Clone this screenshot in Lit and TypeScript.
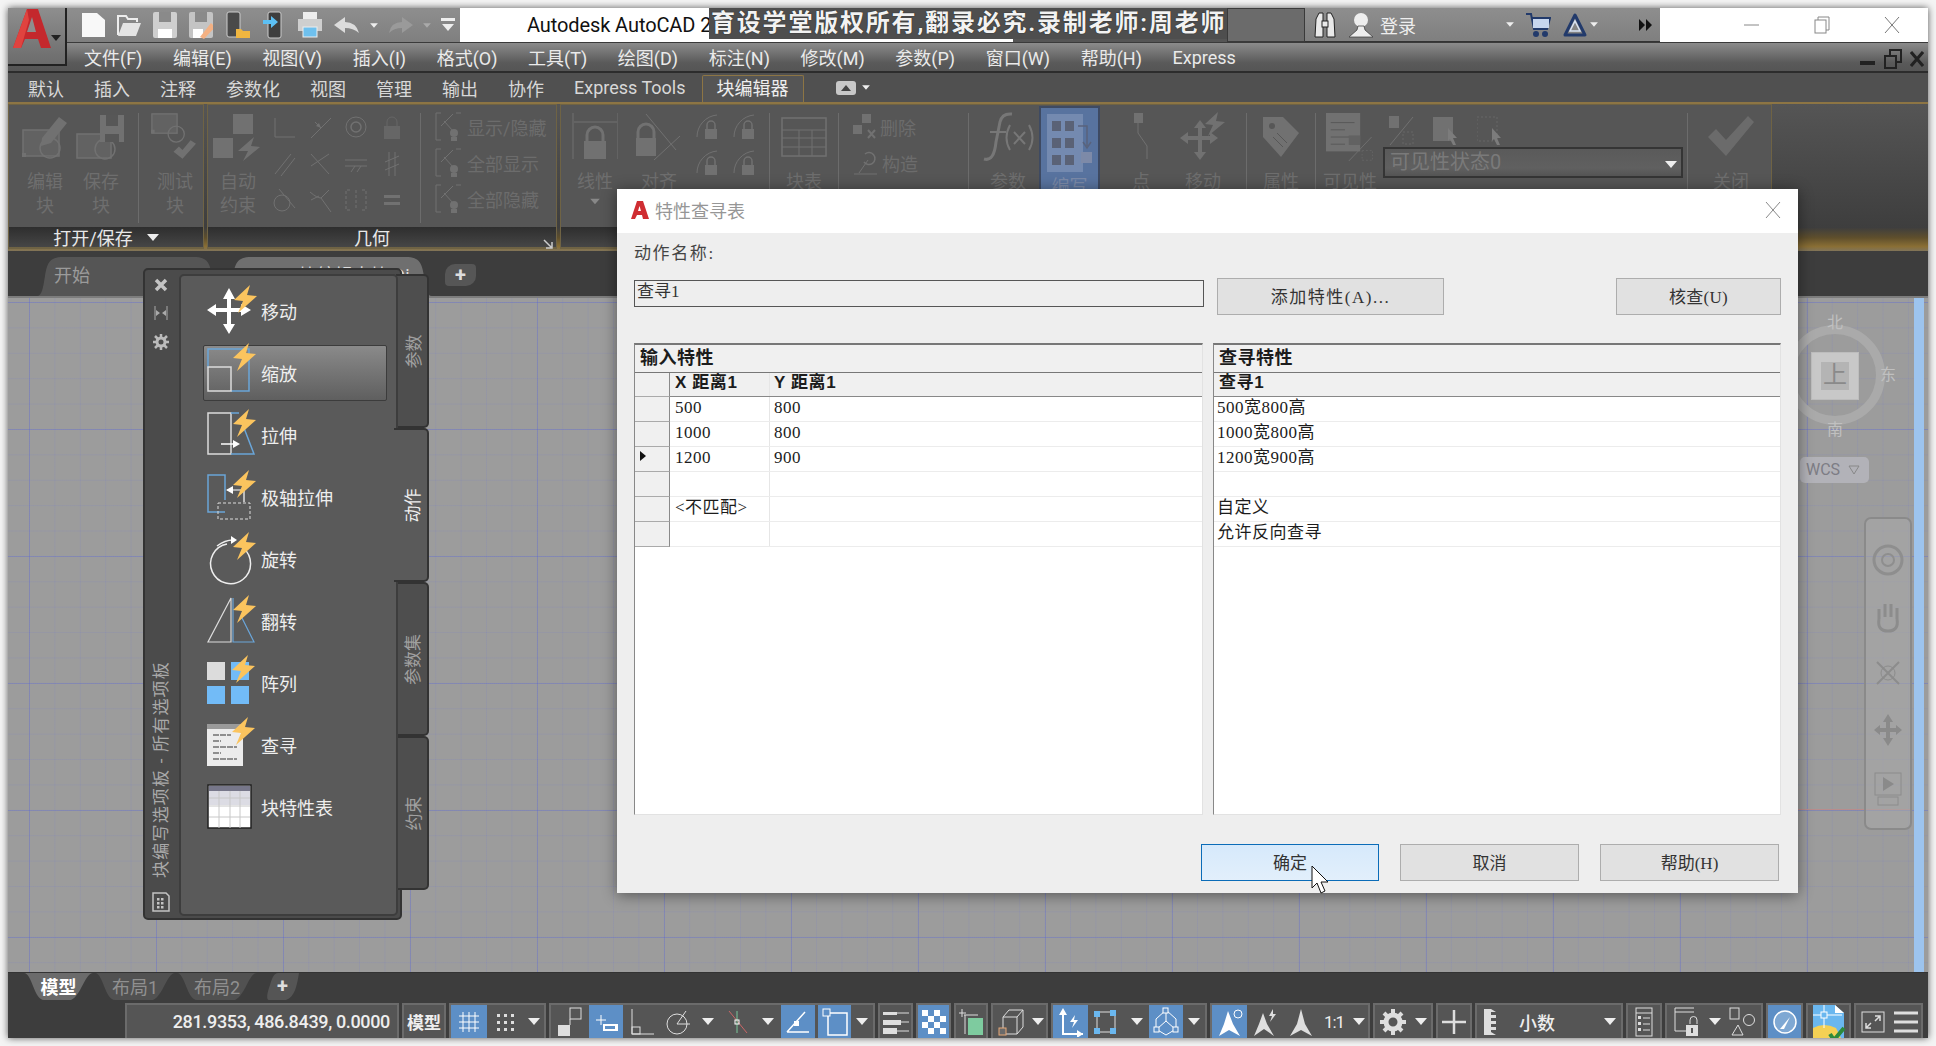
import { LitElement, html, css, svg } from "lit";
import { customElement } from "lit/decorators.js";

const ic = (w: number, h: number, body: unknown) =>
  html`<svg width=${w} height=${h} viewBox="0 0 ${w} ${h}" fill="none">${body}</svg>`;

const BOLT = (x: number, y: number, s = 1) => svg`<path transform="translate(${x} ${y}) scale(${s})" d="M17 0 L1 15 L10 16 L5 28 L24 11 L14 10 Z" fill="#fbc45e"/>`;

/* ---------- ribbon (disabled) icons ---------- */
const D = "#717171";
const rIcons = {
  edit: ic(46, 46, svg`<rect x="1" y="16" width="36" height="26" stroke=${D} stroke-width="1.5" fill="#626262"/><circle cx="28" cy="34" r="10" stroke=${D} stroke-width="1.5"/><rect x="0" y="39" width="4" height="4" fill=${D}/><path d="M20 24 L37 3 L45 9 L29 29 L19 32Z" fill=${D}/>`),
  save: ic(50, 46, svg`<rect x="1" y="20" width="34" height="24" stroke=${D} stroke-width="1.5" fill="#626262"/><circle cx="29" cy="35" r="10" stroke=${D} stroke-width="1.5"/><rect x="24" y="1" width="24" height="27" fill=${D}/><rect x="30" y="1" width="12" height="11" fill="#575757"/><rect x="29" y="20" width="14" height="8" fill="#575757"/>`),
  test: ic(48, 48, svg`<g transform="scale(.9 .88)"><rect x="1" y="1" width="28" height="22" stroke=${D} stroke-width="1.5" fill="#626262"/><circle cx="28" cy="24" r="9" stroke=${D} stroke-width="1.5"/><rect x="0" y="19" width="4" height="4" fill=${D}/><path d="M25 44 L31 38 L35 42 L44 31 L50 35 L35 52Z" fill=${D}/></g>`),
  auto: ic(50, 48, svg`<rect x="20" y="1" width="20" height="20" fill=${D}/><rect x="0" y="25" width="20" height="20" fill=${D}/><path d="M41 24 L25 38 L35 38 L30 48 L47 34 L38 33Z" fill=${D}/>`),
  bigLock: ic(46, 48, svg`<path d="M1 0 V46 M46 0 V46 M2 9 H45" stroke=${D}/><path d="M15 28 V22 a8 8 0 0 1 16 0 V28" stroke=${D} stroke-width="3"/><rect x="12" y="28" width="22" height="18" fill=${D}/>`),
  align: ic(46, 50, svg`<path d="M10 2 L40 38 M18 48 L44 24" stroke=${D}/><path d="M2 26 V20 a8 8 0 0 1 16 0 V26" stroke=${D} stroke-width="3"/><rect x="0" y="26" width="20" height="18" fill=${D}/>`),
  arc: ic(24, 30, svg`<path d="M2 26 a22 22 0 0 1 20 -22" stroke=${D}/><path d="M12 18 V14 a4 4 0 0 1 8 0 V18" stroke=${D} stroke-width="1.5"/><rect x="10" y="18" width="12" height="10" fill=${D}/>`),
  table: ic(46, 40, svg`<rect x="1" y="1" width="44" height="38" stroke=${D} stroke-width="1.5"/><path d="M1 13 H45 M1 21 H45 M1 30 H45 M18 13 V39 M31 13 V39" stroke=${D}/>`),
  del: ic(24, 26, svg`<rect x="9" y="0" width="9" height="9" fill=${D}/><rect x="0" y="11" width="9" height="9" fill=${D}/><path d="M15 16 L22 24 M22 16 L15 24" stroke=${D} stroke-width="2"/>`),
  build: ic(26, 26, svg`<path d="M1 24 H24 M6 23 L15 10" stroke=${D}/><path d="M12 4 a6 6 0 1 1 -1 8" stroke=${D} stroke-width="1.5"/>`),
  fx: ic(52, 50, svg`<path d="M2 47 Q12 50 14 30 L18 10 Q20 1 30 2" stroke="#777" stroke-width="3"/><path d="M8 20 H24" stroke="#777" stroke-width="2"/><path d="M28 13 Q21 26 28 38 M47 13 Q54 26 47 38 M32 20 L43 32 M43 20 L32 32" stroke="#777" stroke-width="2"/>`),
  author: ic(46, 58, svg`<rect x="0" y="0" width="36" height="58" fill="#8d9dbd" opacity=".55"/><g fill="#5a6276"><rect x="5" y="7" width="9" height="10"/><rect x="18" y="7" width="9" height="10"/><rect x="5" y="24" width="9" height="10"/><rect x="18" y="24" width="9" height="10"/><rect x="5" y="41" width="9" height="10"/><rect x="18" y="41" width="9" height="10"/></g><path d="M31 12 H40 V32 M36 28 L40 34 L44 28" stroke="#59637c" stroke-width="1.5"/><rect x="34" y="38" width="11" height="11" fill="#7d8aa8"/>`),
  point: ic(16, 48, svg`<rect x="1" y="0" width="9" height="10" fill=${D}/><path d="M5 10 V20 L14 33 V46" stroke=${D}/>`),
  move: ic(48, 50, svg`<path d="M21 8 L27 16 H23 V24 H31 V20 L39 26 L31 32 V28 H23 V40 H27 L21 48 L15 40 H19 V28 H9 V32 L1 26 L9 20 V24 H19 V16 H15Z" fill=${D}/><path d="M39 0 L26 12 L34 13 L29 24 L46 10 L37 9Z" fill=${D}/>`),
  tag: ic(40, 44, svg`<path d="M2 2 H22 L38 18 L20 42 L2 22Z" fill=${D}/><circle cx="11" cy="11" r="3" fill="#575757"/><path d="M12 22 L22 32 M16 18 L26 28" stroke="#575757"/>`),
  vis: ic(48, 48, svg`<g transform="scale(.95 .8)"><rect x="0" y="0" width="36" height="48" fill=${D}/><path d="M5 12 H30 M5 21 H20 M5 30 H28 M5 39 H20" stroke="#555"/><rect x="24" y="28" width="12" height="12" fill="#626262"/><path d="M24 60 L48 30" stroke=${D}/><rect x="38" y="47" width="11" height="12" stroke="#666" stroke-dasharray="2 2"/></g>`),
  vis1: ic(26, 30, svg`<rect x="0" y="0" width="10" height="12" fill=${D}/><path d="M1 29 L24 1" stroke=${D}/><rect x="14" y="16" width="10" height="12" stroke="#666" stroke-dasharray="2 2"/>`),
  vis2: ic(26, 30, svg`<rect x="0" y="1" width="20" height="24" fill=${D}/><path d="M15 12 L24 22 L20 22 L23 29 L20 29 L17 23 L15 25Z" fill="#7c7c7c"/>`),
  vis3: ic(26, 30, svg`<rect x="0" y="1" width="20" height="24" stroke="#666" stroke-dasharray="2 2"/><path d="M15 12 L24 22 L20 22 L23 29 L20 29 L17 23 L15 25Z" fill="#7c7c7c"/>`),
  check: ic(50, 42, svg`<path d="M2 21 L10 13 L20 24 L42 0 L48 6 L20 40Z" fill="#6b6b6b"/>`),
  show: ic(26, 30, svg`<path d="M6 1 H1 V28 H6 M21 1 H26" stroke=${D}/><path d="M6 14 L18 2 M9 9 L18 19" stroke=${D}/><circle cx="19" cy="21" r="4" fill=${D}/><rect x="16" y="25" width="6" height="4" fill=${D}/>`),
};
const sm = [
  svg`<path d="M2 2 V21 H22" stroke=${D}/>`,
  svg`<path d="M2 22 L22 2 M6 6 L12 12" stroke=${D}/><path d="M12 12 L7 10 L10 7Z" fill=${D}/>`,
  svg`<circle cx="11" cy="11" r="10" stroke=${D}/><circle cx="11" cy="11" r="5" stroke=${D} stroke-width="1.5"/>`,
  svg`<path d="M6 10 V6 a5 5 0 0 1 10 0 V10" stroke="#666"/><rect x="3" y="10" width="16" height="13" fill="#666"/>`,
  svg`<path d="M2 22 L18 2 M8 24 L22 6" stroke=${D}/>`,
  svg`<path d="M2 2 L20 22 M2 14 L20 2" stroke=${D}/>`,
  svg`<path d="M0 8 H22 M0 14 H22 M6 20 L10 14 M12 20 L16 14" stroke=${D}/>`,
  svg`<path d="M8 0 V24 M14 0 V24 M4 10 L18 4 M4 18 L18 12" stroke=${D}/>`,
  svg`<circle cx="9" cy="15" r="8" stroke=${D}/><path d="M6 1 L22 20" stroke=${D}/>`,
  svg`<path d="M1 4 Q8 10 12 10 L22 24 M12 10 L20 2 M2 12 L10 8" stroke=${D}/>`,
  svg`<path d="M5 2 H1 V22 H5 M17 2 H21 V22 H17 M11 2 V22" stroke=${D} stroke-dasharray="3 2"/>`,
  svg`<rect x="3" y="7" width="16" height="3" fill=${D}/><rect x="3" y="14" width="16" height="3" fill=${D}/>`,
];

/* ---------- status bar icons ---------- */
const W = "#dedede";
const st = {
  grid: ic(24, 24, svg`<path d="M2 6 H22 M2 12 H22 M2 18 H22 M6 2 V22 M12 2 V22 M18 2 V22" stroke="#fff"/>`),
  dots: ic(20, 20, svg`<g fill=${W}><rect x="2" y="2" width="3" height="3"/><rect x="9" y="2" width="3" height="3"/><rect x="16" y="2" width="3" height="3"/><rect x="2" y="9" width="3" height="3"/><rect x="9" y="9" width="3" height="3"/><rect x="16" y="9" width="3" height="3"/><rect x="2" y="16" width="3" height="3"/><rect x="9" y="16" width="3" height="3"/><rect x="16" y="16" width="3" height="3"/></g>`),
  snap: ic(26, 30, svg`<rect x="13" y="1" width="11" height="11" stroke=${W}/><path d="M13 12 V18" stroke=${W}/><rect x="1" y="18" width="12" height="11" fill=${W}/>`),
  plus: ic(26, 26, svg`<path d="M8 6 V16 M3 11 H13" stroke="#fff"/><rect x="10" y="15" width="15" height="7" fill="#fff"/><rect x="12" y="17" width="10" height="3" fill="#5d8fc6"/>`),
  ortho: ic(24, 30, svg`<path d="M2 2 V27 H24" stroke=${W}/><rect x="2" y="20" width="8" height="7" stroke=${W}/>`),
  polar: ic(26, 26, svg`<circle cx="11" cy="15" r="10" stroke=${W}/><path d="M11 15 H24 M11 15 L20 2" stroke=${W}/>`),
  osnap: ic(22, 26, svg`<path d="M2 2 L20 24" stroke="#c66"/><path d="M10 2 V24" stroke="#7bc79a"/><rect x="8" y="11" width="4" height="4" stroke="#fff"/>`),
  ang: ic(26, 26, svg`<path d="M2 23 H24 M2 23 L20 3" stroke="#fff" stroke-width="1.5"/><rect x="9" y="12" width="5" height="5" fill="#fff"/>`),
  box: ic(26, 28, svg`<rect x="6" y="5" width="19" height="22" stroke="#fff" stroke-width="1.5"/><rect x="1" y="1" width="7" height="7" fill="#5d8fc6" stroke="#fff"/>`),
  lines: ic(28, 24, svg`<rect x="1" y="2" width="14" height="3" fill=${W}/><rect x="1" y="10" width="18" height="5" fill=${W}/><rect x="1" y="18" width="14" height="6" fill=${W}/><path d="M15 3 H27 M19 12 H27 M15 21 H27" stroke=${W}/>`),
  trans: ic(26, 26, svg`<rect x="1" y="1" width="24" height="24" fill="#fff"/><g fill="#5d8fc6"><rect x="7" y="1" width="6" height="6"/><rect x="19" y="1" width="6" height="6"/><rect x="1" y="7" width="6" height="6"/><rect x="13" y="7" width="6" height="6"/><rect x="7" y="13" width="6" height="6"/><rect x="19" y="13" width="6" height="6"/><rect x="1" y="19" width="6" height="6"/><rect x="13" y="19" width="6" height="6"/></g>`),
  green: ic(26, 28, svg`<path d="M4 1 V9 M1 5 H8 M6 7 H20 M7 7 V26" stroke=${W}/><rect x="10" y="10" width="15" height="17" fill="#7ecb9f"/>`),
  cube: ic(26, 28, svg`<path d="M5 9 L11 2 H25 V19 L19 26 H5 Z M5 9 H19 V26 M19 9 L25 2" stroke=${W}/><rect x="1" y="20" width="7" height="7" stroke="#e8a877" fill="#6a6a6a"/>`),
  ucs: ic(26, 30, svg`<path d="M5 4 V27 H25" stroke="#fff" stroke-width="2"/><path d="M5 1 L9 8 H1Z M25 27 L19 23 V31Z" fill="#fff"/><path d="M17 8 L12 15 H16 L14 21 L20 13 H16Z" fill="#fff"/>`),
  bracket: ic(26, 28, svg`<rect x="4" y="4" width="18" height="20" stroke=${W}/><g fill="#6ab7ef"><rect x="1" y="3" width="6" height="6"/><rect x="17" y="2" width="6" height="6"/><rect x="1" y="20" width="6" height="6"/><rect x="17" y="20" width="6" height="6"/></g>`),
  gizmo: ic(28, 30, svg`<path d="M14 4 L14 14 L5 22 M14 14 L23 22 M14 3 L24 12 V22 L14 28 L4 22 V12Z" stroke="#fff"/><g fill="#5d8fc6" stroke="#fff"><rect x="11" y="1" width="5" height="5"/><rect x="2" y="20" width="5" height="5"/><rect x="21" y="20" width="5" height="5"/></g>`),
  star: ic(26, 30, svg`<path d="M11 4 L16 17 L23 29 L12 23 L2 29 L7 17Z" fill="#fff"/><circle cx="21" cy="7" r="4" stroke="#fff"/>`),
  star2: ic(26, 30, svg`<path d="M11 6 L15 17 L22 29 L12 22 L2 29 L7 17Z" fill=${W}/><path d="M21 2 L17 9 H20 L18 15 L24 7 H21Z" fill=${W}/>`),
  star3: ic(24, 30, svg`<path d="M12 2 L16 17 L23 29 L12 23 L1 29 L8 17Z" fill=${W}/>`),
  gear: ic(26, 26, svg`<circle cx="13" cy="13" r="7" stroke=${W} stroke-width="5"/><path d="M13 0 V5 M13 21 V26 M0 13 H5 M21 13 H26 M4 4 L8 8 M18 18 L22 22 M22 4 L18 8 M8 18 L4 22" stroke=${W} stroke-width="4"/>`),
  cross: ic(26, 26, svg`<path d="M13 1 V25 M1 13 H25" stroke=${W} stroke-width="2.5"/>`),
  ruler: ic(14, 26, svg`<path d="M1 0 H8 L13 3 H8 V6 H13 V9 H8 V12 H13 V15 H8 V18 H13 V21 H8 V23 L13 26 H1Z" fill=${W}/>`),
  list: ic(18, 30, svg`<rect x="1" y="1" width="16" height="28" stroke=${W}/><path d="M1 6 H17 M8 11 H15 M8 17 H15 M8 23 H15" stroke=${W}/><g fill=${W}><rect x="3" y="9" width="3" height="3"/><rect x="3" y="15" width="3" height="3"/><rect x="3" y="21" width="3" height="3"/></g>`),
  winlock: ic(26, 30, svg`<path d="M1 1 H20 M1 5 H20 M1 1 V24 H13" stroke=${W}/><path d="M16 17 V13 a3.5 3.5 0 0 1 7 0 V17" stroke=${W}/><rect x="12" y="18" width="12" height="11" fill=${W}/><rect x="17" y="21" width="2" height="5" fill="#555"/>`),
  shapes: ic(26, 30, svg`<rect x="1" y="1" width="9" height="11" stroke=${W}/><circle cx="20" cy="13" r="5.5" stroke=${W}/><path d="M9 18 L14 28 H3Z" stroke=${W}/>`),
  hw: ic(24, 24, svg`<circle cx="12" cy="12" r="11" stroke="#fff" stroke-width="1.5" fill="#7fa8d3"/><path d="M7 19 L17 7 L11 19Z" fill="#fff"/>`),
  cloud: ic(34, 36, svg`<path d="M23 1 L32 9 V36 H1 V1Z" fill="#6ab7ef"/><path d="M23 1 V9 H32Z" fill="#fff"/><path d="M1 24 Q12 18 24 24 L30 36 H1Z" fill="#f4d054"/><path d="M1 11 H30 M12 1 V24" stroke="#fff"/><rect x="9" y="8" width="6" height="6" stroke="#fff" fill="#6ab7ef"/><path d="M18 30 L22 36 L32 24" stroke="#2d8a3c" stroke-width="4"/>`),
  expand: ic(24, 22, svg`<rect x="1" y="1" width="22" height="20" stroke=${W}/><path d="M5 17 L10 12 M5 12 V17 H10 M19 5 L14 10 M14 5 H19 V10" stroke=${W} stroke-width="1.5"/>`),
  menu: ic(24, 22, svg`<path d="M0 2 H24 M0 11 H24 M0 20 H24" stroke=${W} stroke-width="3"/>`),
};

const tabPath = (w: number, h: number) =>
  `M0 ${h} C5 ${h} 6 ${h - 8} 8 ${h - 20} C10 ${h - 32} 12 0 26 0 H${w - 26} C${w - 12} 0 ${w - 10} ${h - 32} ${w - 8} ${h - 20} C${w - 6} ${h - 8} ${w - 5} ${h} ${w} ${h}Z`;
const lowPath = (w: number, h: number) =>
  `M0 0 H${w} C${w - 8} 0 ${w - 12} ${h - 4} ${w - 22} ${h} H20 C10 ${h} 8 0 0 0Z`;

/* ---------- palette icons ---------- */
const B = "#6aa5d8";
const L = "#dcdcdc";
const pIcons = [
  ic(52, 50, svg`<path d="M22 2 L28 13 H24 V22 H34 V18 L44 24 L34 30 V26 H24 V38 H28 L22 48 L16 38 H20 V26 H9 V30 L0 24 L9 18 V22 H20 V13 H16Z" fill="#fff"/>${BOLT(26, -1)}`),
  ic(52, 50, svg`<path d="M1 20 V1 H42 V43 H24" stroke=${B} stroke-width="1.5"/><rect x="1" y="19" width="23" height="24" stroke=${L} stroke-width="1.5"/>${BOLT(25, -5, 1)}`),
  ic(52, 50, svg`<rect x="1" y="3" width="23" height="41" stroke=${L} stroke-width="1.5"/><path d="M24 3 H32 M37 18 L47 44 H24" stroke=${B} stroke-width="1.5"/><path d="M14 34 H31" stroke="#fff" stroke-width="1.5"/><path d="M33 34 L26 30 V38Z" fill="#fff"/>${BOLT(25, -1)}`),
  ic(52, 50, svg`<path d="M18 40 H1 V3 H18 V28" stroke=${B} stroke-width="1.5"/><rect x="11" y="31" width="32" height="16" stroke=${L} stroke-dasharray="3 2"/><path d="M20 18 H37 V30" stroke="#fff" stroke-width="1.2"/><path d="M19 18 L26 14 V22Z" fill="#fff"/>${BOLT(25, -2)}`),
  ic(52, 50, svg`<path d="M36 14 A20 20 0 1 1 20 10" stroke="#eee" stroke-width="1.5"/><path d="M10 12 Q18 6 26 6" stroke="#eee" stroke-width="1.5"/><path d="M30 6 L24 2 V10Z" fill="#fff"/>${BOLT(25, -2)}`),
  ic(52, 50, svg`<path d="M24 2 L1 46 H24Z" stroke=${L} stroke-width="1.2"/><path d="M26 2 V46 H47 L34 20" stroke=${B} stroke-width="1.2"/>${BOLT(25, -1)}`),
  ic(52, 50, svg`<rect x="0" y="4" width="18" height="18" fill="#dcdcdc"/><rect x="24" y="4" width="18" height="18" fill="#72bbf7"/><rect x="0" y="28" width="18" height="18" fill="#72bbf7"/><rect x="24" y="28" width="18" height="18" fill="#72bbf7"/>${BOLT(24, -3)}`),
  ic(52, 50, svg`<rect x="0" y="4" width="36" height="42" fill="#ececec"/><rect x="0" y="4" width="36" height="5" fill="#9a9a9a"/><path d="M6 15 H24 M6 21 H14 M6 27 H30 M6 33 H14 M6 39 H30" stroke="#333" stroke-dasharray="6 1"/>${BOLT(24, -3)}`),
  ic(52, 50, svg`<rect x="1" y="3" width="43" height="43" fill="#fff" stroke="#222" stroke-width="1.5"/><rect x="2" y="4" width="41" height="5" fill="#77778a"/><rect x="2" y="9" width="41" height="14" fill="#dcdce4"/><path d="M2 16 H43 M2 24 H43 M2 35 H43 M12 9 V46 M23 9 V46 M33 9 V46" stroke="#c8c8c8"/>`),
];
const pLabels = ["移动", "缩放", "拉伸", "极轴拉伸", "旋转", "翻转", "阵列", "查寻", "块特性表"];

const smallCell = (i: number) => html`<div class="sm">${ic(24, 26, sm[i])}</div>`;
const tool = (w: number, icon: unknown, a: string, b: unknown = "") => html`
  <div class="tool" style="width:${w}px">
    <div class="ticon">${icon}</div>
    <div class="tl">${a}</div>${b ? html`<div class="tl">${b}</div>` : ""}
  </div>`;
const rowBtn = (icon: unknown, t: string) => html`<div class="rowbtn">${icon}<span>${t}</span></div>`;

const sItem = (w: number, c: unknown, on = false) => html`<div class="si ${on ? "on" : ""}" style="width:${w}px">${c}</div>`;
const arrow = (w = 18) => html`<div class="si" style="width:${w}px"><i class="tri"></i></div>`;
const group = (w: number, ...c: unknown[]) => html`<div class="grp" style="width:${w}px">${c}</div>`;

@customElement("app-root")
export class AppRoot extends LitElement {
  static styles = css`
    :host { display: block; width: 1936px; height: 1046px; overflow: hidden; background: #f4f4f4;
      font-family: Roboto, "Noto Sans CJK SC", sans-serif; }
    * { box-sizing: border-box; }
    .page { position: relative; width: 1936px; height: 1046px; padding: 8px; }
    .win { width: 1920px; height: 1030px; display: flex; flex-direction: column; background: #555;
      box-shadow: 0 0 7px rgba(0,0,0,.65); }

    .logo { position: absolute; left: 8px; top: 8px; width: 59px; height: 58px; z-index: 3; background: linear-gradient(#8e8e8e,#6c6c6c); border-right: 2px solid #222; border-bottom: 2px solid #222; }
    .logo svg { position: absolute; left: 3px; top: 0; }
    .logo i { position: absolute; right: 4px; top: 27px; border-left: 5px solid transparent; border-right: 5px solid transparent; border-top: 6px solid #222; }

    .titlebar { height: 34px; display: flex; flex: none; }
    .qat { width: 452px; padding-left: 59px; display: flex; align-items: center; background: linear-gradient(#8e8e8e,#7f7f7f); }
    .q { display: flex; align-items: center; justify-content: center; flex: none; }
    .ttl { width: 249px; background: #fff; color: #111; font-size: 20px; padding-left: 67px; line-height: 34px; white-space: nowrap; letter-spacing: -.1px; }
    .wm { width: 518px; background: #4e4e4e; color: #f2f2f2; font-size: 24px; font-weight: 700; line-height: 31px; height: 31px; letter-spacing: 1.8px; white-space: nowrap; padding-left: 2px; position: relative; text-shadow: 0 0 1px #000; overflow: visible; }
    .wmbar { position: absolute; left: 0; top: 31px; height: 3px; width: 304px; background: #fff; }
    .search { width: 78px; background: #6b6b6b; border: 1px solid #3a3a3a; }
    .rtools { width: 355px; background: linear-gradient(#8e8e8e,#7f7f7f); display: flex; align-items: center; padding-left: 8px; border-bottom: 1px solid #333; }
    .login { color: #eee; font-size: 18px; margin-left: 7px; width: 124px; }
    .winctl { flex: 1; background: #fff; display: flex; align-items: center; padding-left: 84px; gap: 54px; }
    .tri.s { transform: scale(.65); }
    .tri.g { border-top-color: #aaa; }

    .menubar { height: 31px; flex: none; display: flex; align-items: center; padding-left: 76px; gap: 30.6px; font-size: 18px; color: #eaeaea;
      background: linear-gradient(#8b8b8b,#5a5a5a 70%,#555); border-top: 1px solid #3a3a3a; border-bottom: 2px solid #2c2c2c; position: relative; white-space: nowrap; }
    .mdi { position: absolute; right: 4px; top: 6px; display: flex; gap: 8px; align-items: center; }

    .rtabs { height: 31px; flex: none; background: #505050; display: flex; align-items: center; padding-left: 20px; gap: 30px; font-size: 18px; color: #d8d8d8; border-bottom: 2px solid #8d7544; white-space: nowrap; }
    .rtabs .act { margin-left: -14px; margin-right: -16px; height: 27px; margin-top: 2px; padding: 0 14px; line-height: 25px; background: #555; border: 1px solid #8d7544; border-bottom: 0; border-radius: 2px 2px 0 0; color: #eee; }
    .eye { display: flex; align-items: center; gap: 4px; margin-left: 18px; }

    .ribbon { height: 147px; flex: none; display: flex; position: relative;
      background: linear-gradient(#555,#3e3e3e 84%,#5f4f2c 91%,#8a6f35 97%,#80745a 100%); }
    .panel { display: flex; flex-direction: column; height: 145px; flex: none; background: #565656; border: 1px solid #6f6344; border-width: 1px 1px 0 1px; margin-right: 3px; }
    .pbody { height: 122px; display: flex; padding-top: 5px; }
    .pb1 { padding-left: 8px; } .pb2 { padding-left: 2px; } .pb3 { padding-left: 6px; }
    .ptitle { height: 22px; background: linear-gradient(#2e2e2e,#464646); color: #e8e8e8; font-size: 18px; display: flex; align-items: center; justify-content: center; gap: 14px; border-bottom: 2px solid #6f6344; position: relative; }
    .ptitle.geo { padding-right: 20px; }
    .launch { position: absolute; right: 3px; top: 5px; }
    .tool { display: flex; flex-direction: column; align-items: center; flex: none; margin-top: 3px; }
    .ticon { height: 48px; display: flex; align-items: center; justify-content: center; margin-bottom: 9px; }
    .tl { color: #6e6e6e; font-size: 18px; line-height: 24px; }
    .tl .tri { display: block; margin-top: 4px; transform: scale(.8); border-top-color: #888; }
    .sep { width: 1px; height: 110px; background: #6c6c6c; flex: none; margin-top: 3px; }
    .sep.a { margin-left: 9px; margin-right: 8px; }
    .sep.b { margin-left: 9px; } .sep.c { margin-left: 14px; } .sep.d { margin-left: 4px; }
    .smgrid { display: grid; grid-template-columns: repeat(4, 36px); grid-auto-rows: 36px; margin: 1px 0 0 1px; flex: none; }
    .sm { display: flex; align-items: center; justify-content: center; }
    .rows { display: flex; flex-direction: column; margin-top: -1px; flex: none; }
    .rows.w { width: 129px; }
    .rows.w .rowbtn { gap: 3px; }
    .rowbtn { height: 36px; display: flex; align-items: center; gap: 6px; color: #6c6c6c; font-size: 18px; white-space: nowrap; padding-left: 14px; }
    .smgrid2 { display: grid; grid-template-columns: repeat(2, 37px); grid-auto-rows: 36px; margin-top: 1px; flex: none; }
    .blue { width: 61px; height: 122px; margin: -4px 8px 0 -8px; background: #58739f; border: 2px solid #3e4a62; border-bottom: 0; display: flex; flex-direction: column; align-items: center; padding-top: 6px; flex: none; }
    .blue .tl { margin-top: 3px; color: #7b8aa8; }
    .vwrap { flex: none; margin-left: -1px; }
    .vrow { display: flex; gap: 18px; padding: 6px 0 0 6px; height: 36px; margin-bottom: -36px; }
    .select { width: 300px; height: 31px; margin-top: 37px; background: linear-gradient(#5a5a5a,#606060 70%,#555); border: 2px solid #353535; color: #7a7a7a; font-size: 20px; line-height: 27px; padding-left: 5px; display: flex; justify-content: space-between; white-space: nowrap; }
    .select .tri { margin: 12px 4px 0 0; }

    .filetabs { height: 45px; flex: none; background: #3d3d3d; position: relative; display: flex; padding-left: 29px; }
    .ftab { position: relative; flex: none; display: flex; align-items: center; height: 39px; margin-top: 6px; padding-bottom: 6px; }
    .ftab svg { position: absolute; left: 0; top: 0; }
    .ftab span { position: relative; color: #9b9b9b; font-size: 18px; padding-left: 17px; white-space: nowrap; }
    .ftab.two { margin-left: 5px; }
    .ftab.two span { color: #ddd; padding-left: 30px; }
    .fadd { position: relative; width: 31px; height: 22px; margin: 13px 0 0 13px; background: #565656; border-radius: 10px 4px 10px 4px; color: #ddd; text-align: center; font-size: 20px; line-height: 22px; font-weight: 700; }

    .canvas { flex: 1; position: relative; overflow: hidden; background-color: #9c9c9c; border-top: 2px solid #7d7d7d;
      background-image:
        linear-gradient(to right, rgba(92,104,210,.32) 1px, transparent 1px),
        linear-gradient(to bottom, rgba(92,104,210,.32) 1px, transparent 1px),
        linear-gradient(to right, rgba(110,120,210,.14) 1px, transparent 1px),
        linear-gradient(to bottom, rgba(110,120,210,.14) 1px, transparent 1px);
      background-size: 127px 127px, 127px 127px, 25.4px 25.4px, 25.4px 25.4px;
      background-position: 21px 4px, 21px 4px, 21px 4px, 21px 4px; }
    .strip { position: absolute; right: 4px; top: 0; bottom: 0; width: 10px; background: #9dc4ee; }
    .axis { position: absolute; left: 1400px; right: 16px; top: 511px; height: 1px; background: #b98c8c; }
    .ring { position: absolute; left: 1777px; top: 27px; width: 100px; height: 100px; border: 9px solid #aaaaaa; border-radius: 50%; }
    .cubeb { position: absolute; left: 1803px; top: 54px; width: 48px; height: 48px; background: #c8c8c8; border: 1px solid #bdbdbd; display: flex; align-items: center; justify-content: center; }
    .cubeb span { width: 28px; height: 28px; background: #b4b4b4; color: #8a8a8a; font-size: 24px; line-height: 26px; text-align: center; }
    .dir { position: absolute; color: #c0c0c0; font-size: 16px; }
    .n { left: 1819px; top: 11px; } .e { left: 1872px; top: 63px; } .s { left: 1819px; top: 118px; }
    .wcs { position: absolute; left: 1792px; top: 159px; width: 69px; height: 26px; background: #b2b2b8; border-radius: 5px; color: #7d7d85; font-size: 16px; line-height: 26px; padding-left: 6px; display: flex; gap: 8px; align-items: center; }
    .nav { position: absolute; left: 1856px; top: 219px; width: 48px; height: 313px; border: 2px solid #8a8a8a; border-radius: 7px; background: rgba(170,170,170,.55); display: flex; flex-direction: column; align-items: center; gap: 25px; padding-top: 25px; }

    .ltabs { height: 31px; flex: none; display: flex; background: #3d3d3d; padding-left: 16px; border-top: 1px solid #333; }
    .ltab { position: relative; flex: none; height: 27px; display: flex; align-items: center; justify-content: center; margin-right: 2px; padding-bottom: 2px; }
    .ltab svg { position: absolute; left: 0; top: 0; }
    .ltab span { position: relative; color: #909090; font-size: 18px; }
    .ltab.on span { color: #fff; font-weight: 700; }
    .ltab.add { margin-left: 7px; }
    .ltab.add span { color: #ddd; font-weight: 700; font-size: 20px; }

    .status { height: 35px; flex: none; display: flex; background: #3d3d3d; padding-left: 117px; gap: 3px; }
    .grp { display: flex; flex: none; height: 35px; background: #555; border: 2px solid #6b6b6b; border-bottom: 0; overflow: hidden; }
    .si { flex: none; display: flex; align-items: center; justify-content: center; height: 33px; color: #eee; font-size: 17px; white-space: nowrap; }
    .si.on { background: #5d8fc6; }
    .tri { width: 0; height: 0; border-left: 6px solid transparent; border-right: 6px solid transparent; border-top: 7px solid #eee; }
    .coord { width: 270px; justify-content: flex-end; padding-right: 7px; font-weight: 500; font-size: 18px; letter-spacing: -.35px; }
    .mdl { width: 40px; font-weight: 700; }
    .scale { letter-spacing: -1px; }
    .dec { font-size: 18px; font-weight: 500; }

    .palette { position: absolute; left: 143px; top: 268px; width: 259px; height: 652px; background: #4b4b4b; border: 2px solid #333; border-radius: 5px; display: flex; }
    .pstrip { width: 34px; flex: none; display: flex; flex-direction: column; align-items: center; padding: 8px 2px 0 0; gap: 14px; color: #bbb; }
    .vt { writing-mode: vertical-rl; text-orientation: sideways; transform: rotate(180deg); color: #a9a9a9; font-size: 17px; white-space: nowrap; margin: 297px 4px 0 0; letter-spacing: 1.2px; }
    .pmain { width: 219px; flex: none; height: 642px; margin-top: 4px; background: #5a5a5a; border: 2px solid #3d3d3d; border-radius: 5px; padding: 7px 0 0 22px; position: relative; z-index: 1; }
    .item { height: 56px; width: 184px; margin: 0 0 6px 0; display: flex; align-items: center; color: #eee; font-size: 18px; padding-left: 3px; border: 1px solid transparent; border-radius: 2px; }
    .item svg { flex: none; overflow: visible; }
    .item span { margin-left: 2px; }
    .item.sel { background: linear-gradient(#8a8a8a,#5f5f5f); border-color: #3c3c3c; }
    .ptabs { width: 33px; flex: none; margin-top: 4px; margin-left: -2px; display: flex; flex-direction: column; }
    .ptab { height: 154px; background: #4e4e4e; border: 2px solid #333; border-left: 0; border-radius: 0 5px 5px 0; display: flex; align-items: center; justify-content: center; color: #a0a0a0; font-size: 17px; flex: none; }
    .ptab span { transform: rotate(-90deg); white-space: nowrap; }
    .ptab.on { background: #5a5a5a; color: #eee; position: relative; z-index: 2; margin-left: -2px; width: 35px; }

    .dialog { position: absolute; left: 617px; top: 189px; width: 1181px; height: 704px; background: #eee; box-shadow: 0 2px 14px rgba(0,0,0,.45); display: flex; flex-direction: column;
      font-family: "Liberation Serif", "Noto Sans CJK SC", serif; font-size: 17px; color: #1c1c1c; overflow: hidden; }
    .dtitle { height: 44px; flex: none; background: #fff; display: flex; align-items: center; padding: 0 0 2px 14px; gap: 6px; color: #969696; font-family: "Noto Sans CJK SC", sans-serif; font-size: 18px; }
    .dclose { margin-left: auto; margin-right: 17px; display: flex; }
    .dbody { padding: 10px 17px 0; display: flex; flex-direction: column; flex: 1; position: relative; }
    .lbl { height: 22px; line-height: 22px; color: #444; letter-spacing: 1.6px; }
    .line { display: flex; margin-top: 13px; height: 37px; }
    .input { width: 570px; height: 27px; margin-top: 2px; border: 1px solid #555; padding-left: 2px; line-height: 22px; color: #333; }
    .btn { height: 37px; background: #e1e1e1; border: 1px solid #adadad; display: flex; align-items: center; justify-content: center; color: #333; flex: none; font-size: 17px; padding-bottom: 2px; }
    .b-add { width: 227px; margin-left: 13px; letter-spacing: 1.5px; }
    .b-chk { width: 165px; margin-left: auto; letter-spacing: .3px; }
    .tables { display: flex; margin-top: 28px; height: 472px; gap: 10px; }
    .tb { flex: none; background: #fff; border: 1px solid #e2e2e2; border-top: 2px solid #777; border-left: 1px solid #888; position: relative; display: flex; flex-direction: column; }
    .tb.l { width: 569px; } .tb.r { width: 568px; }
    .tt { height: 27px; flex: none; background: #f0f0f0; font-weight: 700; padding-left: 5px; line-height: 22px; font-size: 18px; letter-spacing: .5px; font-family: "Noto Sans CJK SC", sans-serif; }
    .tr { display: flex; height: 25px; flex: none; border-bottom: 1px solid #ececec; line-height: 22px; letter-spacing: .5px; }
    .tr.hd { background: #f0f0f0; border-top: 1px solid #777; border-bottom: 1px solid #888; font-weight: 700; font-size: 17px; line-height: 19px; letter-spacing: .6px; font-family: "Liberation Sans", "Noto Sans CJK SC", sans-serif; }
    .rh { width: 35px; flex: none; background: #f0f0f0; border-right: 1px solid #8a8a8a; border-bottom: 1px solid #aaa; margin-bottom: -1px; position: relative; }
    .rh.cur::after { content: ""; position: absolute; left: 5px; top: 4px; border-left: 6px solid #111; border-top: 5px solid transparent; border-bottom: 5px solid transparent; }
    .c1 { width: 100px; flex: none; padding-left: 5px; border-right: 1px solid #e6e6e6; white-space: nowrap; }
    .c2 { flex: 1; padding-left: 4px; }
    .c3 { padding-left: 3px; white-space: nowrap; }
    .c3.h { padding-left: 5px; }
    .dbtns { display: flex; justify-content: flex-end; gap: 21px; margin-top: 29px; margin-right: 2px; }
    .b-ok { width: 178px; background: linear-gradient(#d6e9fb,#e2effb); border-color: #0b6cb8; }
    .b-n { width: 179px; }
    .mark { position: absolute; color: rgba(0,0,0,.02); font-size: 40px; font-family: "Noto Sans CJK SC", sans-serif; transform: rotate(-45deg); white-space: nowrap; z-index: 2; pointer-events: none; }
    .m1 { left: 241px; top: 331px; } .m2 { left: 410px; top: 188px; }
    .cursor { position: absolute; left: 1310px; top: 865px; z-index: 5; display: flex; }
  `;

  render() {
    const Q = (w: number, c: unknown, ml = 0) => html`<div class="q" style="width:${w}px;margin-left:${ml}px">${c}</div>`;
    const tabs = ["默认", "插入", "注释", "参数化", "视图", "管理", "输出", "协作", "Express Tools"];
    const menus = ["文件(F)", "编辑(E)", "视图(V)", "插入(I)", "格式(O)", "工具(T)", "绘图(D)", "标注(N)", "修改(M)", "参数(P)", "窗口(W)", "帮助(H)", "Express"];
    const left = [["500", "800"], ["1000", "800"], ["1200", "900"], ["", ""], ["<不匹配>", ""], ["", ""]];
    const right = ["500宽800高", "1000宽800高", "1200宽900高", "", "自定义", "允许反向查寻"];
    return html`
    <div class="page">
      <div class="win">
        <div class="titlebar">
          <div class="qat">
            ${Q(24, ic(24, 26, svg`<path d="M1 1 H16 L24 8 V25 H1Z" fill="#f8f8f8"/>`), 14)}
            ${Q(24, ic(24, 24, svg`<path d="M1 22 V3 H9 L11 6 H20 V9" stroke="#eee" stroke-width="2"/><path d="M1 23 L6 10 H24 L19 23Z" fill="#e4e4e4"/>`), 12)}
            ${Q(24, ic(24, 28, svg`<rect y="1" width="24" height="26" rx="2" fill="#cfcfcf"/><rect x="6" y="1" width="12" height="10" fill="#8a8a8a"/><rect x="5" y="18" width="14" height="9" fill="#fff"/>`), 12)}
            ${Q(24, ic(24, 28, svg`<rect y="1" width="24" height="26" rx="2" fill="#c4c4c4"/><rect x="6" y="1" width="12" height="10" fill="#8a8a8a"/><rect x="4" y="18" width="10" height="9" fill="#fff"/><path d="M11 26 L22 12 L26 16 L15 28Z" fill="#f4b183"/>`), 12)}
            ${Q(24, ic(24, 28, svg`<rect x="1" y="1" width="13" height="25" rx="2" fill="#4a4a4a" stroke="#ccc"/><path d="M10 18 H15 L17 20 H24 V27 H10Z" fill="#f0b640"/>`), 13)}
            ${Q(22, ic(22, 28, svg`<rect x="5" y="1" width="13" height="26" rx="2" fill="#3e3e3e" stroke="#ccc"/><path d="M0 9 H8 V5 L15 11 L8 17 V13 H0Z" fill="#5cc0f4"/>`), 13)}
            ${Q(24, ic(24, 26, svg`<rect x="5" y="0" width="14" height="7" fill="#eee"/><rect x="0" y="7" width="24" height="12" fill="#cfcfcf"/><rect x="5" y="15" width="14" height="10" fill="#6ec0ee" stroke="#eee"/>`), 13)}
            ${Q(26, ic(26, 18, svg`<path d="M0 9 L11 1 V6 Q22 6 25 17 Q19 12 11 12 V17Z" fill="#dcdcdc"/>`), 12)}
            ${Q(14, html`<i class="tri s"></i>`, 7)}
            ${Q(24, ic(24, 18, svg`<path d="M24 9 L13 1 V6 Q2 6 0 17 Q5 12 13 12 V17Z" fill="#9a9a9a"/>`), 8)}
            ${Q(14, html`<i class="tri s g"></i>`, 7)}
            ${Q(14, ic(14, 14, svg`<rect y="0" width="14" height="3" fill="#eee"/><path d="M1 6 H13 L7 13Z" fill="#eee"/>`), 7)}
          </div>
          <div class="ttl">Autodesk AutoCAD 2</div>
          <div class="wm">育设学堂版权所有,翻录必究.录制老师:周老师<div class="wmbar"></div></div>
          <div class="search"></div>
          <div class="rtools">
            ${ic(24, 28, svg`<path d="M2 26 L3 8 L6 2 H10 V26Z M14 26 V2 H18 L21 8 L22 26Z" fill="#e8e8e8" stroke="#222"/><rect x="9" y="10" width="6" height="6" fill="#e8e8e8" stroke="#222"/>`)}
            ${Q(24, ic(24, 28, svg`<circle cx="12" cy="9" r="7" fill="#eee"/><path d="M9 15 H15 L16 19 L24 26 H0 L8 19Z" fill="#eee" stroke="#333" stroke-width=".7"/>`), 12)}
            <div class="login">登录</div>
            <i class="tri s"></i>
            ${Q(26, ic(26, 28, svg`<path d="M1 3 H6 L9 18 H22 L25 7 H7" stroke="#223a6b" stroke-width="2"/><rect x="8" y="8" width="16" height="9" fill="#c7d6ee"/><circle cx="11" cy="23" r="3" fill="#223a6b"/><circle cx="20" cy="23" r="3" fill="#223a6b"/>`), 9)}
            ${Q(26, ic(26, 28, svg`<path d="M13 4 L23 24 H3Z" stroke="#223a6b" stroke-width="3" stroke-linejoin="round"/><path d="M13 10 L18 20 H8Z" stroke="#d9e3f4" stroke-width="1.5"/>`), 11)}
            <i class="tri s"></i>
            ${Q(14, ic(14, 12, svg`<path d="M0 0 L6 6 L0 12Z M7 0 L13 6 L7 12Z" fill="#111"/>`), 39)}
          </div>
          <div class="winctl">
            ${ic(16, 16, svg`<path d="M0 8 H15" stroke="#888"/>`)}
            ${ic(16, 18, svg`<rect x="1" y="4" width="11" height="13" stroke="#888"/><path d="M4 4 V1 H15 V14 H12" stroke="#888"/>`)}
            ${ic(16, 18, svg`<path d="M1 1 L15 17 M15 1 L1 17" stroke="#777"/>`)}
          </div>
        </div>

        <div class="menubar">
          ${menus.map((m) => html`<span>${m}</span>`)}
          <div class="mdi">
            ${ic(16, 16, svg`<rect x="0" y="10" width="15" height="4" fill="#222"/>`)}
            ${ic(18, 20, svg`<rect x="1" y="7" width="11" height="12" stroke="#222" stroke-width="2"/><path d="M6 6 V1 H17 V13 H13" stroke="#222" stroke-width="2"/>`)}
            ${ic(14, 16, svg`<path d="M1 1 L13 15 M13 1 L1 15" stroke="#222" stroke-width="3"/>`)}
          </div>
        </div>

        <div class="rtabs">
          ${tabs.map((t) => html`<span>${t}</span>`)}
          <span class="act">块编辑器</span>
          <div class="eye">${ic(20, 14, svg`<rect width="20" height="14" rx="3" fill="#c8c8c8"/><path d="M10 4 L15 10 H5Z" fill="#444"/>`)}<i class="tri s"></i></div>
        </div>

        <div class="ribbon">
          <div class="panel" style="width:196px">
            <div class="pbody pb1">
              ${tool(56, rIcons.edit, "编辑", "块")}
              ${tool(56, rIcons.save, "保存", "块")}
              <div class="sep a"></div>
              ${tool(56, rIcons.test, "测试", "块")}
            </div>
            <div class="ptitle">打开/保存 <i class="tri"></i></div>
          </div>
          <div class="panel" style="width:350px">
            <div class="pbody pb2">
              ${tool(56, rIcons.auto, "自动", "约束")}
              <div class="smgrid">${sm.map((_, i) => smallCell(i))}</div>
              <div class="sep b"></div>
              <div class="rows">
                ${rowBtn(rIcons.show, "显示/隐藏")}${rowBtn(rIcons.show, "全部显示")}${rowBtn(rIcons.show, "全部隐藏")}
              </div>
            </div>
            <div class="ptitle geo">几何<span class="launch">${ic(10, 10, svg`<path d="M1 1 L9 9 M9 3 V9 H3" stroke="#ccc" stroke-width="1.5"/>`)}</span></div>
          </div>
          <div class="panel" style="width:1212px">
            <div class="pbody pb3">
              ${tool(56, rIcons.bigLock, "线性", html`<i class="tri"></i>`)}
              ${tool(72, rIcons.align, "对齐")}
              <div class="smgrid2">${rIcons.arc}${rIcons.arc}${rIcons.arc}${rIcons.arc}</div>
              <div class="sep"></div>
              ${tool(68, rIcons.table, "块表")}
              <div class="sep"></div>
              <div class="rows w">
                ${rowBtn(rIcons.del, "删除")}${rowBtn(rIcons.build, "构造")}
              </div>
              <div class="sep"></div>
              ${tool(78, rIcons.fx, "参数")}
              <div class="blue">${rIcons.author}<div class="tl">编写</div></div>
              ${tool(66, rIcons.point, "点")}
              ${tool(58, rIcons.move, "移动")}
              <div class="sep c"></div>
              ${tool(68, rIcons.tag, "属性")}
              <div class="sep"></div>
              ${tool(68, rIcons.vis, "可见性")}
              <div class="vwrap">
                <div class="vrow">${rIcons.vis1}${rIcons.vis2}${rIcons.vis3}</div>
                <div class="select"><span>可见性状态0</span><i class="tri"></i></div>
              </div>
              <div class="sep d"></div>
              ${tool(86, rIcons.check, "关闭")}
            </div>
            <div class="ptitle"></div>
          </div>
        </div>

        <div class="filetabs">
          <div class="ftab" style="width:183px">${ic(183, 39, svg`<path d=${tabPath(183, 39)} fill="#555"/>`)}<span>开始</span></div>
          <div class="ftab two" style="width:207px">${ic(207, 39, svg`<path d=${tabPath(207, 39)} fill="#6f6f6f"/>`)}<span>Ex10 块编辑中块 Di...</span></div>
          <div class="fadd">+</div>
        </div>

        <div class="canvas">
          <div class="strip"></div>
          <div class="axis"></div>
          <div class="ring"></div>
          <div class="cubeb"><span>上</span></div>
          <div class="dir n">北</div>
          <div class="dir e">东</div>
          <div class="dir s">南</div>
          <div class="wcs"><span>WCS</span>${ic(12, 10, svg`<path d="M1 1 H11 L6 9Z" stroke="#888"/>`)}</div>
          <div class="nav">
            ${ic(32, 32, svg`<circle cx="16" cy="16" r="14" stroke="#8e8e8e" stroke-width="3"/><circle cx="16" cy="16" r="6" stroke="#8e8e8e" stroke-width="2"/>`)}
            ${ic(30, 32, svg`<path d="M6 18 V8 M12 16 V3 M18 16 V3 M24 18 V7 M6 18 Q4 30 15 30 Q26 30 24 18" stroke="#8c8c8c" stroke-width="3"/>`)}
            ${ic(30, 30, svg`<path d="M4 4 L26 26 M4 26 L26 4" stroke="#8c8c8c" stroke-width="2"/><circle cx="15" cy="15" r="7" stroke="#8c8c8c"/>`)}
            ${ic(30, 34, svg`<path d="M15 1 L20 9 H17 V15 H23 V12 L29 17 L23 22 V19 H17 V25 H20 L15 33 L10 25 H13 V19 H7 V22 L1 17 L7 12 V15 H13 V9 H10Z" fill="#8a8a8a"/>`)}
            ${ic(30, 34, svg`<rect x="2" y="1" width="26" height="22" stroke="#8c8c8c"/><path d="M10 5 L21 12 L10 19Z" fill="#8a8a8a"/><rect x="5" y="25" width="20" height="8" stroke="#8c8c8c"/>`)}
          </div>
        </div>

        <div class="ltabs">
          <div class="ltab on" style="width:69px">${ic(69, 27, svg`<path d=${lowPath(69, 27)} fill="#6b6b6b"/>`)}<span>模型</span></div>
          <div class="ltab" style="width:80px">${ic(80, 27, svg`<path d=${lowPath(80, 27)} fill="#515151"/>`)}<span>布局1</span></div>
          <div class="ltab" style="width:80px">${ic(80, 27, svg`<path d=${lowPath(80, 27)} fill="#515151"/>`)}<span>布局2</span></div>
          <div class="ltab add" style="width:33px">${ic(33, 27, svg`<path d="M12 0 H33 C31 12 29 24 20 27 H3 C0 27 1 20 4 12 C6 5 8 0 12 0Z" fill="#555"/>`)}<span>+</span></div>
        </div>

        <div class="status">
          ${group(274, html`<div class="si coord">281.9353, 486.8439, 0.0000</div>`)}
          ${group(44, html`<div class="si mdl">模型</div>`)}
          ${group(97, sItem(36, st.grid, true), sItem(36, st.dots), arrow(21))}
          ${group(326, sItem(38, st.snap), sItem(34, st.plus, true), sItem(38, st.ortho), sItem(36, st.polar), arrow(22), sItem(38, st.osnap), arrow(22), sItem(2, ""), sItem(34, st.ang, true), sItem(3, ""), sItem(33, st.box, true), arrow(22))}
          ${group(35, sItem(31, st.lines))}
          ${group(35, sItem(31, st.trans, true))}
          ${group(34, sItem(30, st.green))}
          ${group(57, sItem(36, st.cube), arrow(17))}
          ${group(156, sItem(35, st.ucs, true), sItem(36, st.bracket), arrow(25), sItem(34, st.gizmo, true), arrow(22))}
          ${group(160, sItem(35, st.star, true), sItem(36, st.star2), sItem(35, st.star3), sItem(32, html`<span class="scale">1:1</span>`), arrow(18))}
          ${group(60, sItem(36, st.gear), arrow(20))}
          ${group(36, sItem(32, st.cross))}
          ${group(148, sItem(26, st.ruler), sItem(68, html`<span class="dec">小数</span>`), sItem(28, ""), arrow(22))}
          ${group(36, sItem(32, st.list))}
          ${group(98, sItem(40, st.winlock), arrow(16), sItem(38, st.shapes))}
          ${group(37, sItem(33, st.hw, true))}
          ${group(45, sItem(41, st.cloud))}
          ${group(69, sItem(34, st.expand), sItem(31, st.menu))}
        </div>
      </div>

      <div class="logo">
        ${ic(46, 44, svg`<path d="M16 1 H27 L40 40 H30 L27 31 H14 L10 40 H2Z" fill="#c4282d"/><path d="M21 9 L25 24 H16Z" fill="#8e8e8e"/><path d="M16 1 L2 40 H10 L18 12Z" fill="#e0433f"/>`)}
        <i></i>
      </div>

      <div class="palette">
        <div class="pstrip">
          ${ic(14, 14, svg`<path d="M2 2 L12 12 M12 2 L2 12" stroke="#c4c4c4" stroke-width="3.5"/>`)}
          ${ic(14, 14, svg`<path d="M1 0 V14 M13 0 V14" stroke="#aaa"/><path d="M2 4 L6 7 L2 10Z M12 4 L8 7 L12 10Z" fill="#aaa"/>`)}
          ${ic(16, 16, svg`<circle cx="8" cy="8" r="4" stroke="#bbb" stroke-width="3"/><path d="M8 0 V4 M8 12 V16 M0 8 H4 M12 8 H16 M2 2 L5 5 M11 11 L14 14 M14 2 L11 5 M5 11 L2 14" stroke="#bbb" stroke-width="2.5"/>`)}
          <div class="vt">块编写选项板 - 所有选项板</div>
          ${ic(18, 20, svg`<path d="M1 1 H14 L17 4 V19 H1Z" stroke="#c4c4c4" stroke-width="1.5"/><g fill="#c4c4c4"><rect x="5" y="6" width="2.5" height="2.5"/><rect x="9" y="6" width="2.5" height="2.5"/><rect x="5" y="10" width="2.5" height="2.5"/><rect x="9" y="10" width="2.5" height="2.5"/><rect x="5" y="14" width="2.5" height="2.5"/><rect x="9" y="14" width="2.5" height="2.5"/></g>`)}
        </div>
        <div class="pmain">
          ${pLabels.map((l, i) => html`<div class="item ${i === 1 ? "sel" : ""}">${pIcons[i]}<span>${l}</span></div>`)}
        </div>
        <div class="ptabs">
          <div class="ptab"><span>参数</span></div>
          <div class="ptab on"><span>动作</span></div>
          <div class="ptab"><span>参数集</span></div>
          <div class="ptab"><span>约束</span></div>
        </div>
      </div>

      <div class="dialog">
        <div class="dtitle">
          ${ic(18, 20, svg`<path d="M6 1 H12 L18 19 H12 L11 15 H6 L4 19 H0Z" fill="#cf2d32"/><path d="M8.5 6 L10 11 H7Z" fill="#fff"/>`)}
          <span>特性查寻表</span>
          <div class="dclose">${ic(16, 18, svg`<path d="M1 1 L15 17 M15 1 L1 17" stroke="#888"/>`)}</div>
        </div>
        <div class="dbody">
          <div class="lbl">动作名称:</div>
          <div class="line">
            <div class="input">查寻1</div>
            <div class="btn b-add">添加特性(A)...</div>
            <div class="btn b-chk">核查(U)</div>
          </div>
          <div class="tables">
            <div class="tb l">
              <div class="tt">输入特性</div>
              <div class="tr hd"><div class="rh"></div><div class="c1">X 距离1</div><div class="c2">Y 距离1</div></div>
              ${left.map((r, i) => html`<div class="tr"><div class="rh ${i === 2 ? "cur" : ""}"></div><div class="c1">${r[0]}</div><div class="c2">${r[1]}</div></div>`)}
            </div>
            <div class="tb r">
              <div class="tt">查寻特性</div>
              <div class="tr hd"><div class="c3 h">查寻1</div></div>
              ${right.map((r) => html`<div class="tr"><div class="c3">${r}</div></div>`)}
            </div>
          </div>
          <div class="dbtns">
            <div class="btn b-ok">确定</div>
            <div class="btn b-n">取消</div>
            <div class="btn b-n">帮助(H)</div>
          </div>
          <div class="mark m1">育设学堂</div>
          <div class="mark m2">学堂</div>
        </div>
      </div>

      <div class="cursor">${ic(20, 30, svg`<path d="M2 1 V23 L7 18 L11 28 L15 26 L11 17 L18 17Z" fill="#fff" stroke="#111"/>`)}</div>
    </div>`;
  }
}
